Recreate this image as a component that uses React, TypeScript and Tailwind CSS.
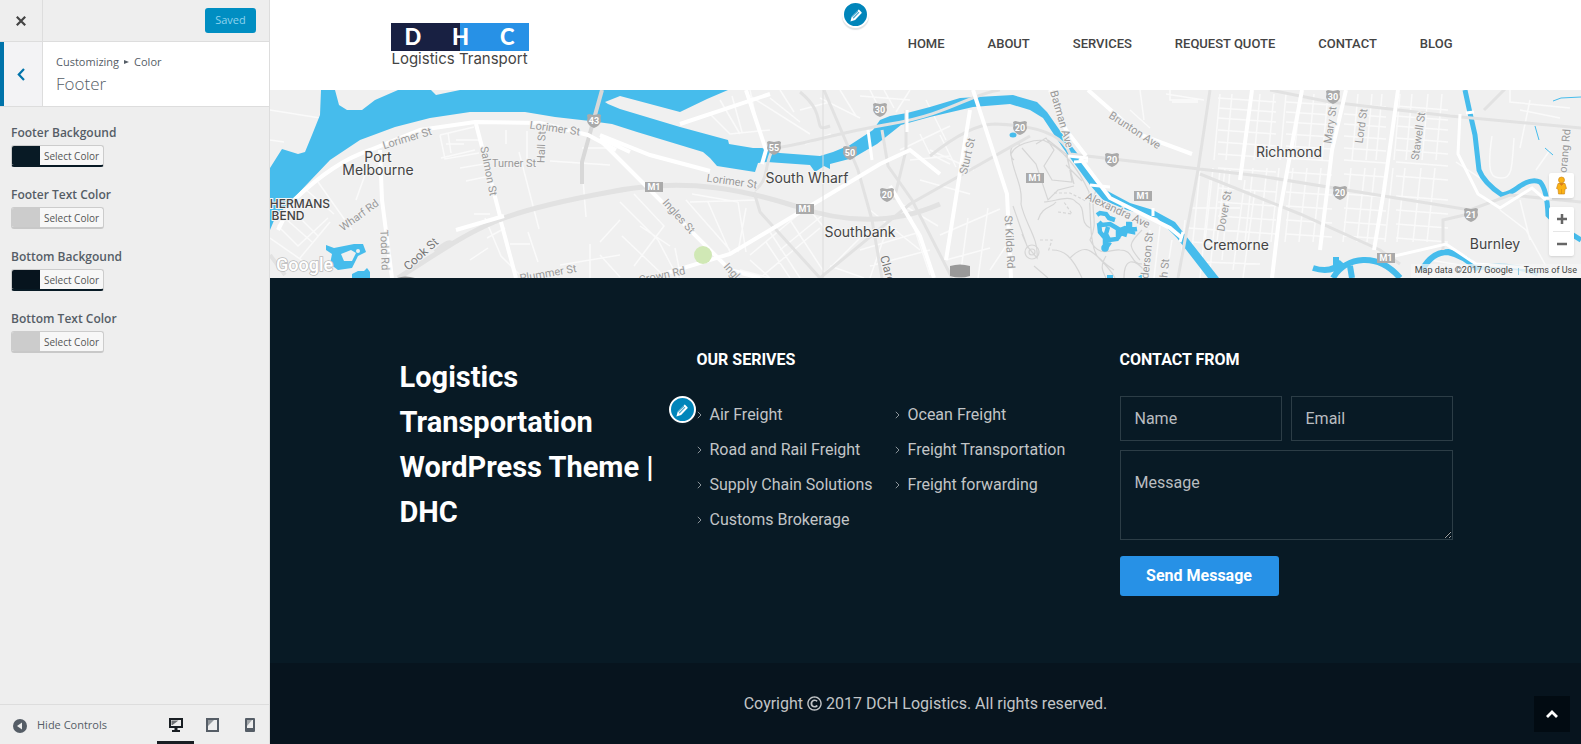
import { useState } from 'react';
import { FaRegCopyright } from 'react-icons/fa';

const NAV_ITEMS = ['Home', 'About', 'Services', 'Request Quote', 'Contact', 'Blog'];

const SERVICES = [
  ['Air Freight', 'Road and Rail Freight', 'Supply Chain Solutions', 'Customs Brokerage'],
  ['Ocean Freight', 'Freight Transportation', 'Freight forwarding'],
];

const COLOR_CONTROLS = [
  { id: 'footer-bg', label: 'Footer Backgound', dark: true, swatch: '#081a25' },
  { id: 'footer-text', label: 'Footer Text Color', dark: false, swatch: '#cccccc' },
  { id: 'bottom-bg', label: 'Bottom Backgound', dark: true, swatch: '#07141e' },
  { id: 'bottom-text', label: 'Bottom Text Color', dark: false, swatch: '#cccccc' },
];

type Device = 'desktop' | 'tablet' | 'mobile';

const DEVICES: Device[] = ['desktop', 'tablet', 'mobile'];

function DeviceIcon({ device }: { device: Device }) {
  if (device === 'desktop') {
    return (
      <svg width="16" height="16" viewBox="0 0 16 16" fill="currentColor" aria-hidden="true">
        <path fillRule="evenodd" d="M1 1h14v10H9.500v2H12v2H4v-2h2.500v-2H1zM3 3v6h10V3z" />
        <path d="M3.500 3.500h7L4.500 8h-1z" opacity=".6" />
      </svg>
    );
  }
  if (device === 'tablet') {
    return (
      <svg width="16" height="16" viewBox="0 0 16 16" fill="currentColor" aria-hidden="true">
        <path fillRule="evenodd" d="M1 1h13v14H1zM3 3v10h9V3z" />
        <path d="M3 3h6L3 9z" opacity=".6" />
      </svg>
    );
  }
  return (
    <svg width="16" height="16" viewBox="0 0 16 16" fill="currentColor" aria-hidden="true">
      <path fillRule="evenodd" d="M4 1h8q1 0 1 1v12q0 1-1 1H4q-1 0-1-1V2q0-1 1-1zM5 3v8h6V3z" />
      <path d="M5 3h5L5 9z" opacity=".5" />
    </svg>
  );
}

function PencilButton({ label }: { label: string }) {
  return (
    <button
      type="button"
      aria-label={label}
      className="flex size-[27px] items-center justify-center rounded-full border-2 border-white bg-[#0085ba] text-white shadow-[0_2px_1px_rgba(46,68,83,0.15)]"
    >
      <svg width="16" height="16" viewBox="0 0 20 20" fill="currentColor" aria-hidden="true">
        <path d="M13.900 3.300l2.700 2.800c.6.600.8 1.300.3 1.800l-8 8.200L3 18l1.700-6.100 8.200-8.300c.4-.5.600-.7 1-.3zM6.900 14.400l7.300-7.500-.7-.8-7.400 7.500zM5.500 12.900l7.200-7.400-.5-.5L5 12.400z" />
      </svg>
    </button>
  );
}

function ColorControl({ control }: { control: (typeof COLOR_CONTROLS)[number] }) {
  return (
    <div className="mb-[17px]">
      <div id={control.id} className="text-xs leading-5 font-semibold text-[#555d66]">
        {control.label}
      </div>
      <button
        type="button"
        aria-describedby={control.id}
        className={`mt-0.5 flex h-[22px] w-[93px] overflow-hidden rounded-[3px] border border-[#ccc] border-b-2 bg-[#f7f7f7] ${
          control.dark ? 'border-b-[#081a25]' : 'border-b-[#c8c8c8]'
        }`}
      >
        <span className="h-full w-7" style={{ backgroundColor: control.swatch }} />
        <span className="flex-1 text-center text-[10px] leading-5 text-[#555]">Select Color</span>
      </button>
    </div>
  );
}

function Sidebar() {
  const [device, setDevice] = useState<Device>('desktop');

  return (
    <aside className="flex w-[270px] shrink-0 flex-col border-r border-[#ddd] bg-[#eee] font-['Open_Sans','Noto_Sans',sans-serif]">
      <div className="flex h-[42px] items-center justify-between border-b border-[#ddd] pr-[13px]">
        <button
          type="button"
          aria-label="Close"
          className="flex h-full w-[43px] items-center justify-center border-r border-[#ddd] text-[#444]"
        >
          <svg width="10" height="10" viewBox="0 0 10 10" stroke="currentColor" strokeWidth="2.200" aria-hidden="true">
            <path d="M.8.800l8.400 8.400M9.200.800L.8 9.200" />
          </svg>
        </button>
        <button
          type="button"
          className="h-[25px] w-[51px] rounded-[3px] bg-[#008ec2] text-[11px] text-[#8fd3ee]"
        >
          Saved
        </button>
      </div>

      <div className="flex h-[65px] border-b border-[#ddd] bg-white">
        <button
          type="button"
          aria-label="Back"
          className="flex w-[43px] items-center justify-center border-r border-l-4 border-r-[#ddd] border-l-[#0073aa] bg-[#f3f3f5] pr-1 text-[#0073aa]"
        >
          <svg width="8" height="13" viewBox="0 0 8 13" fill="none" stroke="currentColor" strokeWidth="2.200" aria-hidden="true">
            <path d="M7 1L1.800 6.500 7 12" />
          </svg>
        </button>
        <div className="px-[13px] pt-[10px] text-[#555d66]">
          <div className="flex items-center text-[11px] leading-5">
            Customizing
            <svg className="mx-[5px]" width="5" height="6" viewBox="0 0 5 6" fill="currentColor" aria-hidden="true">
              <path d="M0 1l5 2-5 2z" />
            </svg>
            Color
          </div>
          <h1 className="text-[17px] leading-6 font-light">Footer</h1>
        </div>
      </div>

      <div className="flex flex-1 flex-col gap-px px-[11px] pt-4">
        {COLOR_CONTROLS.map((control) => (
          <ColorControl key={control.id} control={control} />
        ))}
      </div>

      <div className="flex h-10 items-center border-t border-[#ddd] pr-px text-[#555d66]">
        <button type="button" className="flex flex-1 items-center gap-[10px] pt-0.5 pl-[13px] text-[11px]">
          <svg width="14" height="14" viewBox="0 0 14 14" aria-hidden="true">
            <circle cx="7" cy="7" r="7" fill="currentColor" />
            <path d="M9 3.500v7L4 7z" fill="#eee" />
          </svg>
          Hide Controls
        </button>
        {DEVICES.map((name) => (
          <button
            key={name}
            type="button"
            aria-label={`${name} preview`}
            onClick={() => setDevice(name)}
            className={`flex h-full w-[37px] items-center justify-center border-b-[3px] pt-1 ${
              device === name ? 'border-[#191e23] text-[#191e23]' : 'border-transparent'
            }`}
          >
            <DeviceIcon device={name} />
          </button>
        ))}
      </div>
    </aside>
  );
}

function Logo() {
  return (
    <a href="#home" className="flex w-[138px] flex-col font-['Inter',sans-serif]" aria-label="DHC Logistics Transport">
      <span className="flex h-7 items-center justify-between bg-linear-to-r from-[#182042] from-50% to-[#2791e6] to-50% px-[14px] font-['Lato',sans-serif] text-[22px] leading-7 font-black text-white">
        <span>D</span>
        <span>H</span>
        <span>C</span>
      </span>
      <span className="text-center text-[15px] leading-4 whitespace-nowrap text-[#444]">Logistics Transport</span>
    </a>
  );
}

function SiteHeader() {
  return (
    <header className="relative bg-white">
      <div className="mx-auto flex h-[90px] max-w-[1070px] items-center justify-between pr-2">
        <Logo />
        <nav className="flex gap-[43px] pb-0.5 font-['Roboto',sans-serif] text-[13px] font-medium text-[#444] uppercase">
          {NAV_ITEMS.map((item) => (
            <a key={item} href={`#${item.toLowerCase().replace(' ', '-')}`}>
              {item}
            </a>
          ))}
        </nav>
      </div>
      <div className="absolute top-px left-[572px]">
        <PencilButton label="Edit menu" />
      </div>
    </header>
  );
}

const PLACES: [number, number, string][] = [
  [108, 72, 'Port'],
  [108, 85, 'Melbourne'],
  [537, 93, 'South Wharf'],
  [590, 147, 'Southbank'],
  [1019, 67, 'Richmond'],
  [966, 160, 'Cremorne'],
  [1225, 159, 'Burnley'],
];

// x, y, angle, name
const STREETS: [number, number, number, string][] = [
  [137, 48, -17, 'Lorimer St'],
  [285, 38, 8, 'Lorimer St'],
  [271, 57, -88, 'Hall St'],
  [244, 73, 0, 'Turner St'],
  [219, 81, 79, 'Salmon St'],
  [89, 125, -36, 'Wharf Rd'],
  [115, 160, 88, 'Todd Rd'],
  [278, 183, -10, 'Plummer St'],
  [462, 91, 8, 'Lorimer St'],
  [409, 126, 48, 'Ingles St'],
  [392, 185, -12, 'Crown Rd'],
  [470, 190, 48, 'Ingles St'],
  [697, 66, -77, 'Sturt St'],
  [740, 152, 87, 'St Kilda Rd'],
  [792, 29, 74, 'Batman Ave'],
  [865, 40, 33, 'Brunton Ave'],
  [848, 120, 25, 'Alexandra Ave'],
  [876, 172, -84, 'Anderson St'],
  [893, 190, -84, 'Walsh St'],
  [954, 121, -80, 'Dover St'],
  [1060, 35, -82, 'Mary St'],
  [1091, 36, -82, 'Lord St'],
  [1148, 46, -82, 'Stawell St'],
  [1294, 67, -85, 'Toorang Rd'],
];

const SHIELDS: [number, number, string][] = [
  [324, 31, '43'],
  [504, 58, '55'],
  [580, 63, '50'],
  [610, 20, '30'],
  [617, 105, '20'],
  [750, 38, '20'],
  [842, 70, '20'],
  [1063, 7, '30'],
  [1070, 103, '20'],
  [1201, 125, '21'],
];

const MOTORWAYS: [number, number][] = [
  [384, 97],
  [535, 119],
  [765, 88],
  [873, 106],
  [1116, 168],
];

const BLOCKS = [
  // Port Melbourne
  'M0 20l50 8M0 50l14 2M20 118l28 28M34 98l30 26M48 92l34 48M28 112l-20 24 20 20 30-28M60 132l-30 36M0 148l40 28M8 122l34 30',
  'M170 45l34-8M170 45l5 24 34-6M178 43l3 20M176 54h18M186 50h24M205 60l-34 8M190 78l30-5M196 91l24-5M236 40v14M249 62l20 77M257 41v28M215 128l16 38 18 18M217 148l18-10M204 124h16M312 77l4 50M200 170l18-12M240 154h20M258 142l10 30',
  'M312 58h28M280 71l60 4M96 82l-10 28M320 154v34M290 175l60-10',
  // Fishermans Bend to Southbank
  'M350 112l38 38 20 38M364 104l30 32-30 40M416 110l44 50M422 104l46 8M420 112l68-2M438 112l22 50M468 112l8 50M476 118l-8 44M350 130l-20 22M352 146l40 38M330 165l20 22M400 156l-30-20M405 158l6 30',
  'M480 165l50-42M490 188l60-50M500 142l30 46M520 130l34 52M540 120l16 20M550 188l40-40M560 176l34 12M510 160l44-36M470 180l30 8M480 170l20 18M520 188l-24-36',
  'M440 24l20 20 40-4M450 10l20 34M462 6l10 36M480 0l8 38M500 8l30 24M510 0l14 22M530 20l30-8M550 8l40 20M570 0l16 26M590 6l50 4M600 0l8 16M614 0l10 18M640 0l-14 22M535 54l26-10M480 6l60 38',
  'M600 120l50 40M620 130l-20 58M640 125l20 60M590 160l60-18M600 176l60-16M628 112l40 24M650 44l10 20 20 10M630 60l50-24M640 70l40-4M660 60l44 20M670 45l16 32M656 10l20 40M650 90l50 14M670 145l60-26M676 170l44-12M690 188l8-60M708 188l10-70M720 180l20-30',
  // Cremorne
  'M860 20l20 18M870 0l4 30M900 0v10h28M902 12h26M896 4l38 6M880 140l-4 48M890 136l-6 52M902 150l-6 38M915 130l-6 58M930 80l-8 80M940 90l-10 98M950 80l-10 100M960 80l-8 90M975 90l-12 90M985 100l-12 88M920 118h50M918 138l60 4M922 152l60 4M930 172l60 2',
];

const RICHMOND_ROWS = [8, 18, 28, 40, 52, 64, 78, 98, 112, 126, 140];
const RICHMOND_COLUMNS = [950, 962, 990, 1004, 1016, 1030, 1044, 1058, 1088, 1102, 1112, 1130, 1142, 1158, 1172];

function StreetMap() {
  return (
    <svg
      className="block h-full w-full"
      viewBox="0 0 1311 188"
      preserveAspectRatio="xMidYMid slice"
      role="img"
      aria-label="Map of Melbourne"
      fontFamily="Roboto, sans-serif"
      fill="none"
    >
      <rect width="1311" height="188" fill="#f0f0f0" />

      {/* minor streets */}
      <g stroke="#fafafa" strokeWidth="1.500">
        {BLOCKS.map((d) => (
          <path key={d} d={d} />
        ))}
        {RICHMOND_ROWS.map((y) => (
          <path key={y} d={`M948 ${y}l58 4M1016 ${y + 4}l46 3M1074 ${y + 6}l42 3M1126 ${y + 8}l52 4`} />
        ))}
        {RICHMOND_COLUMNS.map((x) => (
          <path key={x} d={`M${x} 4l-6 66M${x - 7} 78l-8 74`} />
        ))}
        <path d="M1222 46c-6 40 0 42 10 42s10-10 12-40M1250 20l40 8M1260 10l-10 48M1240 0v12l60 6M1280 60l-14 20M1230 120l26 20 20 36M1250 110l10 40M1160 170l60 10M1216 92l-30-20" />
      </g>

      {/* park paths */}
      <g stroke="#d6d6d6" strokeWidth="1.200">
        <path d="M741 64c4-10 22-14 32-14 20 8 36 30 46 52 2 20 0 50 8 64 10 10 16 18 18 22M741 64c2 20 12 30 10 50 4 20 18 34 16 54l-10-12-14-40M752 58l14 16 12 36 10-10 16-4M766 54l10-6 8 12-10 16 8 14 20 2-6-34M778 50l18 14 8 30M774 112c10 0 26-8 32 0 12 6 2 20 14 26M768 130c4-14 14-12 18-18M796 75l16 16M744 70c-6-4-4-18 6-16M782 160c12 0 20 6 30 28M800 168c20-20 24 0 44 12M826 100c-8 20 4 30-6 50 10 20 22 8 30 10 14 0 10 14 22 14M872 140c-14 14-14 16-2 30M836 166c-6 10-4 14 0 22M854 188c0-20 10-20 20-8M764 176l14 12M752 144l6 14" />
        <path d="M784 103l16 0 16 8M788 122l14 2-8-12M770 150l12 0-4 12" strokeDasharray="3 2" />
        <circle cx="762" cy="162" r="7" />
        <circle cx="762" cy="162" r="3" />
      </g>

      {/* water */}
      <g fill="#46bcec">
        <path d="M51 0L50 25 42 45 35 62 28 64 12 59 0 78V140L5 128 22 110 40 91 60 70 90 50 125 37 160 28 200 22H255L285 27 320 31 342 34 367 42 433 62 440 68 447 76 485 82 488 73 497 72 540 75 545 82 554 76 560 79 560 74 583 68 607 54 631 35 660 27 703 17 740 14 760 20 773 28 793 58 820 95 833 110 857 120 887 128 907 148 938 188H949L905 132 883 120 860 113 830 97 807 63 793 45 777 22 767 12 743 5 690 8 660 17 637 23 620 26 610 30 603 40 580 55 563 62 550 66 510 63 492 58 483 58 459 54 458 50 410 37 350 19 338 14 335 12 350 6 410 22 437 9 458 0H190L166 5 161 0H128L105 10 92 20 77 20 69 15 65 0Z" />
        <path d="M56 155l8 3 20-4 9 0 3 8-8 4-6 12-14 2-8-6 2-10-6-4zM82 188v-4l6-3 6 0 3-3 3 4v6zM837 185h6v3h-6zM868 187l4-3v4z" />
        <ellipse cx="743" cy="45" rx="3.500" ry="2.500" />
      </g>
      {/* botanic garden lake */}
      <g stroke="#46bcec" strokeWidth="4.500">
        <path d="M827 125l3-2 6 1 3 4 6 2M829 132l3 3 8-1 5 3 5 3 5-2 4 1M829 133l1 9 5 6 0 8-1 3M838 137l-2 7 3 6 8-1 4-6 6 2M848 140v9M856 134h4v6l7-1M840 152l-4 6M853 140l10 2v-5" />
        <circle cx="835" cy="158" r="1.500" />
      </g>
      <g fill="#f0f0f0">
        <path d="M71 164l10-4 5 3-4 8-8 0z" />
        <circle cx="88" cy="161" r="2" />
      </g>
      <g stroke="#46bcec" strokeWidth="5">
        <path d="M1195 0L1200 23 1205 45 1209 80Q1214 93 1232 105 1240 104 1250 96 1262 88 1270 92 1277 99 1278 125 1290 138 1311 150" />
        <path d="M1043 178Q1062 184 1072 172M1066 167v8M1063 188C1076 166 1108 162 1130 188M1080 176l2 12M1152 180Q1162 162 1178 162 1196 166 1208 180" strokeWidth="6" />
        <path d="M1208 178Q1240 172 1268 184" opacity=".5" />
        <path d="M1283 11l8-3 20-1M1265 36l4 14M1275 58l8 7" strokeWidth="1" />
      </g>

      {/* highways */}
      <g stroke="#e2e2e2" strokeWidth="4">
        <path d="M128 188C210 136 220 124 340 102 420 86 480 102 525 116 570 132 620 136 670 114" strokeWidth="5" />
        <path d="M485 100C500 90 494 70 504 58C530 56 560 44 620 34S700 4 730 0M484 102l6 20 60 66M554 0l34 80 14 50 10 58M612 40l6 36 24 34 40 78M560 36C540 44 560 26 530 2" strokeWidth="3" />
        <path d="M636 20v40l-12 50M550 188l90-74 60-34 60-34M660 66Q700 34 725 34 790 36 800 64L990 86 1200 120 1240 105 1311 112M940 0l-12 80-20 108M930 84l100 40 80 36 20 14M1000 0l60 12 120 14 131 12M1214 20l30-30M1173 160V130l26-6" strokeWidth="3" />
        <path d="M0 165l15 20M165 162q14-14 18-8" />
        <path d="M332 0L312 72v22" stroke="#d8d8d8" />
      </g>

      {/* main streets */}
      <g stroke="#fff" strokeWidth="4">
        <path d="M24 110Q64 72 100 60L150 40 205 32 270 33 318 45 346 60M206 34l24 92M110 60l2 50 10 78M186 140l48-14M231 132l15 56M8 140l10-20" />
        <path d="M330 45l50 20 60 16M330 50l60 60 70 70 30 8M380 188l80-24 150-90 30-14 30 24M476 0l20 60-4 14M330 48l30 14M410 34l90-30M620 96l30 50 14 42" />
        <path d="M703 0l34 104 4 84M780 0l16 40 20 26M810 68l30 40 60 30 12 10M700 20l-24 150M818 0l50 44 54 20M1032 0l-22 120-8 68M1076 0l-14 60-12 100M1128 0l-14 100-10 60M982 0l-12 90" />
        <path d="M602 70l-4-30M637 20v22M798 66l20 2M804 72l14-1M820 95l20 2M883 118v8M913 142l-3 10M1196 23l8-1M1274 108h8M1190 24l-2 40 20 40 22 14 32-20 14 12M1116 168l60-14 30 20 80 6" strokeWidth="3" />
      </g>
      <path d="M553 0v188" stroke="#dcdcdc" />
      <ellipse cx="433" cy="165" rx="9" ry="9" fill="#d0e8b5" />

      {/* labels */}
      <g fill="#9a9a9a" fontSize="11" textAnchor="middle" stroke="#f3f3f3" strokeWidth="2" paintOrder="stroke">
        {STREETS.map(([x, y, angle, name]) => (
          <text key={`${name}-${x}`} transform={`translate(${x} ${y}) rotate(${angle})`} y="4">
            {name}
          </text>
        ))}
        <text transform="translate(151 164) rotate(-42)" y="4" fontSize="12" fill="#777">
          Cook St
        </text>
        <text transform="translate(621 192) rotate(75)" y="4" fontSize="12" fill="#777">
          Clarendon
        </text>
      </g>
      <g fill="#444" fontFamily="Inter, sans-serif" fontSize="14" textAnchor="middle" stroke="#f5f5f5" strokeWidth="2" paintOrder="stroke">
        {PLACES.map(([x, y, name]) => (
          <text key={name} x={x} y={y}>
            {name}
          </text>
        ))}
        <text x="60" y="118" textAnchor="end" fontSize="12" fontWeight="500">
          FISHERMANS
        </text>
        <text x="18" y="130" fontSize="12" fontWeight="500">
          BEND
        </text>
      </g>

      <g fontSize="9" fontWeight="700" textAnchor="middle">
        {SHIELDS.map(([x, y, number]) => (
          <g key={`${x}-${y}`} transform={`translate(${x} ${y})`}>
            <path d="M-7-6l2-1 5 1 5-1 2 1q-1 3 0 6-1 5-7 7-6-2-7-7 1-3 0-6z" fill="#aaa" />
            <text y="3" fill="#fff">
              {number}
            </text>
          </g>
        ))}
        {MOTORWAYS.map(([x, y]) => (
          <g key={x} transform={`translate(${x} ${y})`}>
            <path d="M-9-5H9V5H-9z" fill="#aaa" />
            <text y="3" fill="#fff">
              M1
            </text>
          </g>
        ))}
        <path d="M680 176q10-3 20 0v10q-10 3-20 0zM127 188q8-3 18 0z" fill="#999" />
      </g>
      <text x="6" y="181" fontSize="18" fontWeight="500" fill="#fff" stroke="#bbb" strokeWidth="1.500" paintOrder="stroke">
        Google
      </text>
    </svg>
  );
}

function MapSection() {
  return (
    <section className="relative h-[188px] overflow-hidden">
      <StreetMap />
      <div className="absolute right-[7px] bottom-[22px] flex flex-col gap-[9px] text-[#666]">
        <button
          type="button"
          aria-label="Street View"
          className="flex size-[25px] items-center justify-center rounded-xs bg-white shadow-sm"
        >
          <svg width="11" height="19" viewBox="0 0 11 19" aria-hidden="true">
            <path d="M2 7.500h7l1.500 5-1.500.500-.5 5H2.500L2 13l-1.500-.500z" fill="#fbb216" stroke="#c98212" strokeWidth=".6" />
            <circle cx="5.500" cy="4" r="3" fill="#fbb216" stroke="#c98212" strokeWidth=".6" />
            <path d="M3.500 7.500h4l-2 2zM5.500 13v5" fill="#e8711c" stroke="#c98212" strokeWidth=".5" />
          </svg>
        </button>
        <div className="flex w-[25px] flex-col items-center rounded-xs bg-white shadow-sm">
          <button type="button" aria-label="Zoom in" className="flex h-6 w-full items-center justify-center">
            <svg width="10" height="10" viewBox="0 0 10 10" stroke="currentColor" strokeWidth="2.500" aria-hidden="true">
              <path d="M5 0v10M0 5h10" />
            </svg>
          </button>
          <div className="h-px w-[17px] bg-[#e6e6e6]" />
          <button type="button" aria-label="Zoom out" className="flex h-6 w-full items-center justify-center">
            <svg width="10" height="10" viewBox="0 0 10 10" stroke="currentColor" strokeWidth="2.500" aria-hidden="true">
              <path d="M0 5h10" />
            </svg>
          </button>
        </div>
      </div>
      <div className="absolute right-0 bottom-0 flex h-[14px] items-center bg-[#f5f5f5]/70 px-1 font-['Roboto',sans-serif] text-[9px] text-[#444]">
        <span>Map data ©2017 Google</span>
        <span className="mx-[5px] h-[7px] w-px bg-[#8cc8e0]" />
        <a href="#terms">Terms of Use</a>
      </div>
    </section>
  );
}

function ContactForm() {
  const field =
    'min-w-0 rounded-none border border-[#2c3d46] bg-transparent px-[14px] text-base text-white placeholder:text-[#b9bdc0]';

  return (
    <form className="flex flex-col items-start" onSubmit={(e) => e.preventDefault()}>
      <div className="mb-[9px] grid w-full grid-cols-2 gap-[9px]">
        <input type="text" aria-label="Name" placeholder="Name" className={`h-[45px] ${field}`} />
        <input type="email" aria-label="Email" placeholder="Email" className={`h-[45px] ${field}`} />
      </div>
      <textarea aria-label="Message" placeholder="Message" className={`h-[90px] w-full pt-5 ${field}`} />
      <button type="submit" className="mt-4 h-10 w-[159px] rounded-[3px] bg-[#2791e6] text-base font-bold text-white">
        Send Message
      </button>
    </form>
  );
}

function SiteFooter() {
  return (
    <footer className="flex flex-1 flex-col bg-[#081a25] font-['Roboto',sans-serif] text-[#c2c5c7]">
      <div className="mx-auto grid w-full max-w-[1070px] flex-1 grid-cols-[297fr_423fr_333fr] pt-[70px] pr-2 pl-[9px]">
        <h2 className="pt-[7px] pr-6 text-[29px] leading-[45px] font-bold text-white">
          Logistics Transportation WordPress Theme | DHC
        </h2>

        <div>
          <h3 className="text-base leading-6 font-bold text-white uppercase">Our Serives</h3>
          <div className="relative mt-[31px] grid grid-cols-[198fr_225fr]">
            {SERVICES.map((column) => (
              <ul key={column[0]} className="text-base">
                {column.map((service) => (
                  <li key={service} className="mb-[11px] leading-6">
                    <a href="#services" className="flex items-center gap-2">
                      <svg width="5" height="8" viewBox="0 0 5 8" fill="none" stroke="#8a9399" aria-hidden="true">
                        <path d="M.8.800L4 4 .8 7.200" />
                      </svg>
                      {service}
                    </a>
                  </li>
                ))}
              </ul>
            ))}
            <div className="absolute -top-[7px] -left-7">
              <PencilButton label="Edit widget" />
            </div>
          </div>
        </div>

        <div>
          <h3 className="mb-6 text-base leading-6 font-bold text-white uppercase">Contact From</h3>
          <ContactForm />
        </div>
      </div>

      <div className="relative flex h-[81px] items-center justify-center bg-[#07141e] text-base">
        <p className="flex items-center gap-1">
          Coyright <FaRegCopyright className="size-[15px]" aria-label="©" /> 2017 DCH Logistics. All rights reserved.
        </p>
        <button
          type="button"
          aria-label="Back to top"
          className="absolute right-[11px] bottom-3 flex size-9 items-center justify-center bg-[#020b12] text-white"
        >
          <svg width="12" height="8" viewBox="0 0 12 8" fill="none" stroke="currentColor" strokeWidth="2.800" aria-hidden="true">
            <path d="M1 7l5-5 5 5" />
          </svg>
        </button>
      </div>
    </footer>
  );
}

export default function App() {
  return (
    <div className="flex min-h-screen bg-[#eee]">
      <Sidebar />
      <main className="flex min-w-0 flex-1 flex-col">
        <SiteHeader />
        <MapSection />
        <SiteFooter />
      </main>
    </div>
  );
}
